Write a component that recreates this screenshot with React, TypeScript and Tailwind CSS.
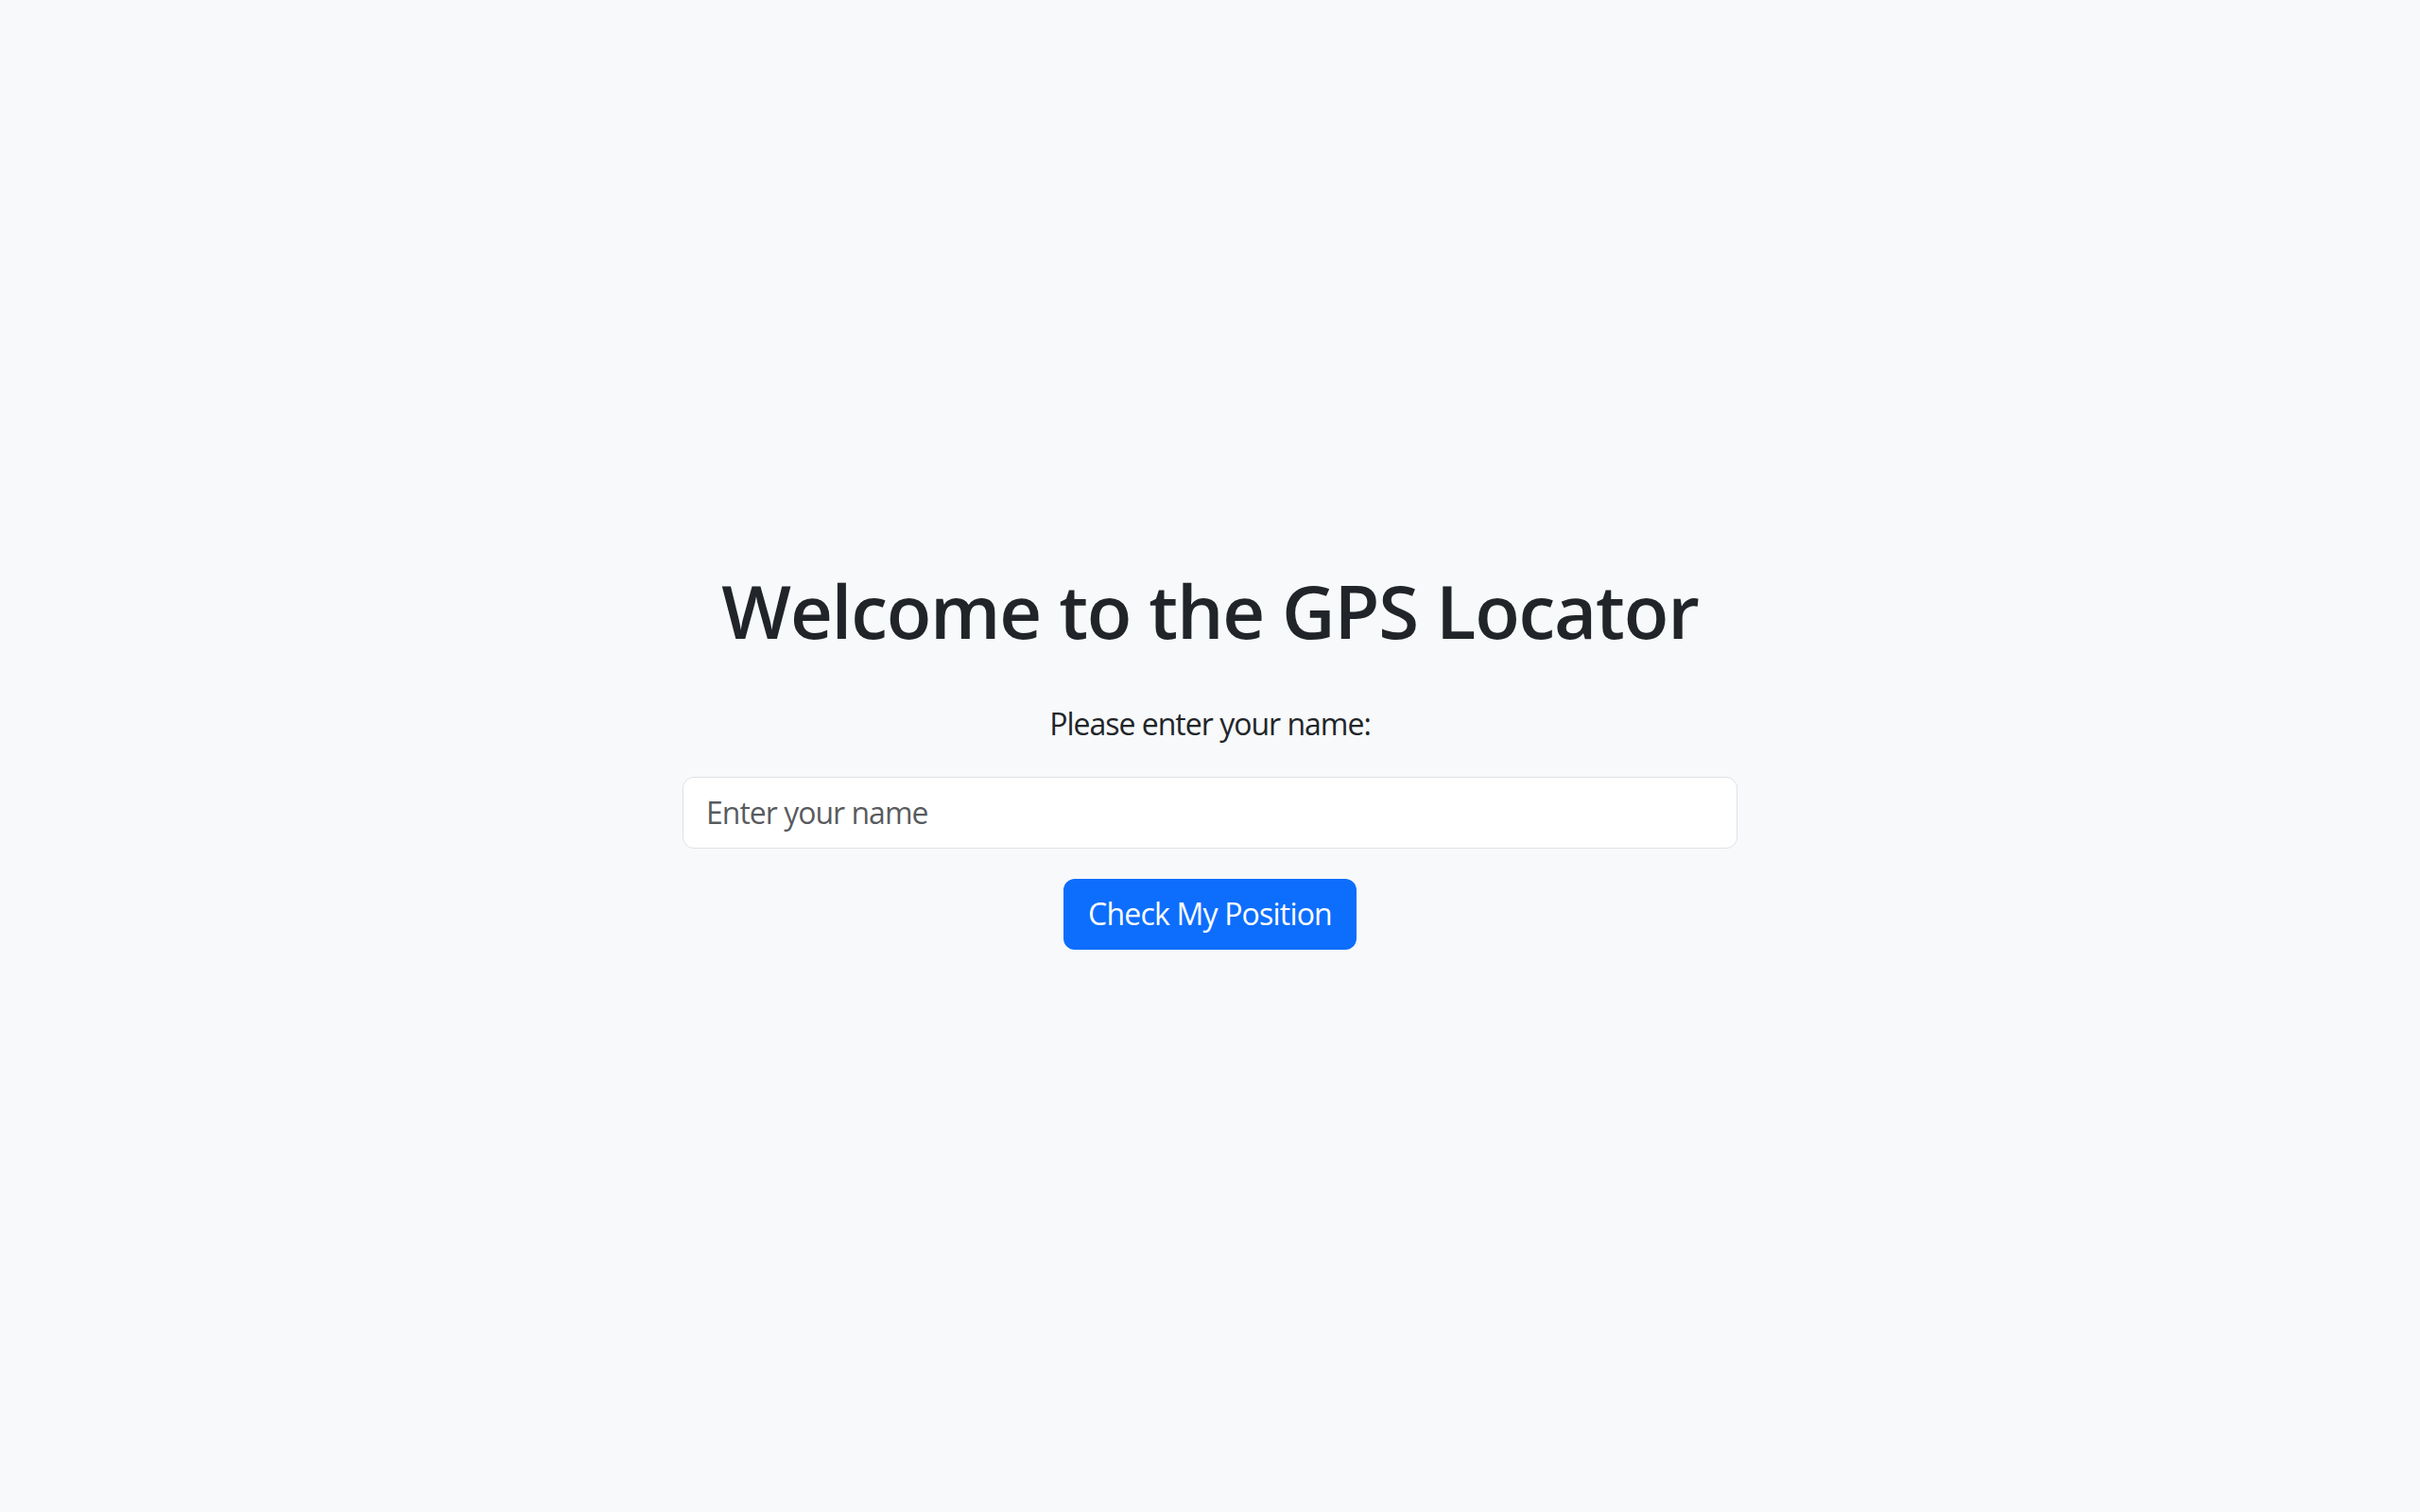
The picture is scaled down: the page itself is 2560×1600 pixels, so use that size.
import { useState } from 'react';

const App: React.FC = () => {
  const [name, setName] = useState('');

  return (
    <div className="min-h-screen bg-[#f8f9fa] flex items-center justify-center pt-[2px] font-['Open_Sans',sans-serif] text-[#212529]">
      <div className="w-[1116px] flex flex-col items-center text-center">
        <h1 className="text-[78px] leading-[96px] font-semibold tracking-[-1.2px] mb-[48px]">
          Welcome to the GPS Locator
        </h1>
        <p className="text-[32px] leading-[48px] tracking-[-1px] mb-[32px]">Please enter your name:</p>
        <input
          type="text"
          value={name}
          onChange={(e) => setName(e.target.value)}
          placeholder="Enter your name"
          className="w-full h-[76px] px-[24px] text-[32px] tracking-[-1px] bg-white border border-[#dee2e6] rounded-[12px] outline-none placeholder:text-[#212529bf]"
        />
        <button className="mt-[32px] h-[75px] w-[310px] text-[32px] tracking-[-0.8px] text-white bg-[#0d6efd] rounded-[12px]">
          Check My Position
        </button>
      </div>
    </div>
  );
};

export default App;
